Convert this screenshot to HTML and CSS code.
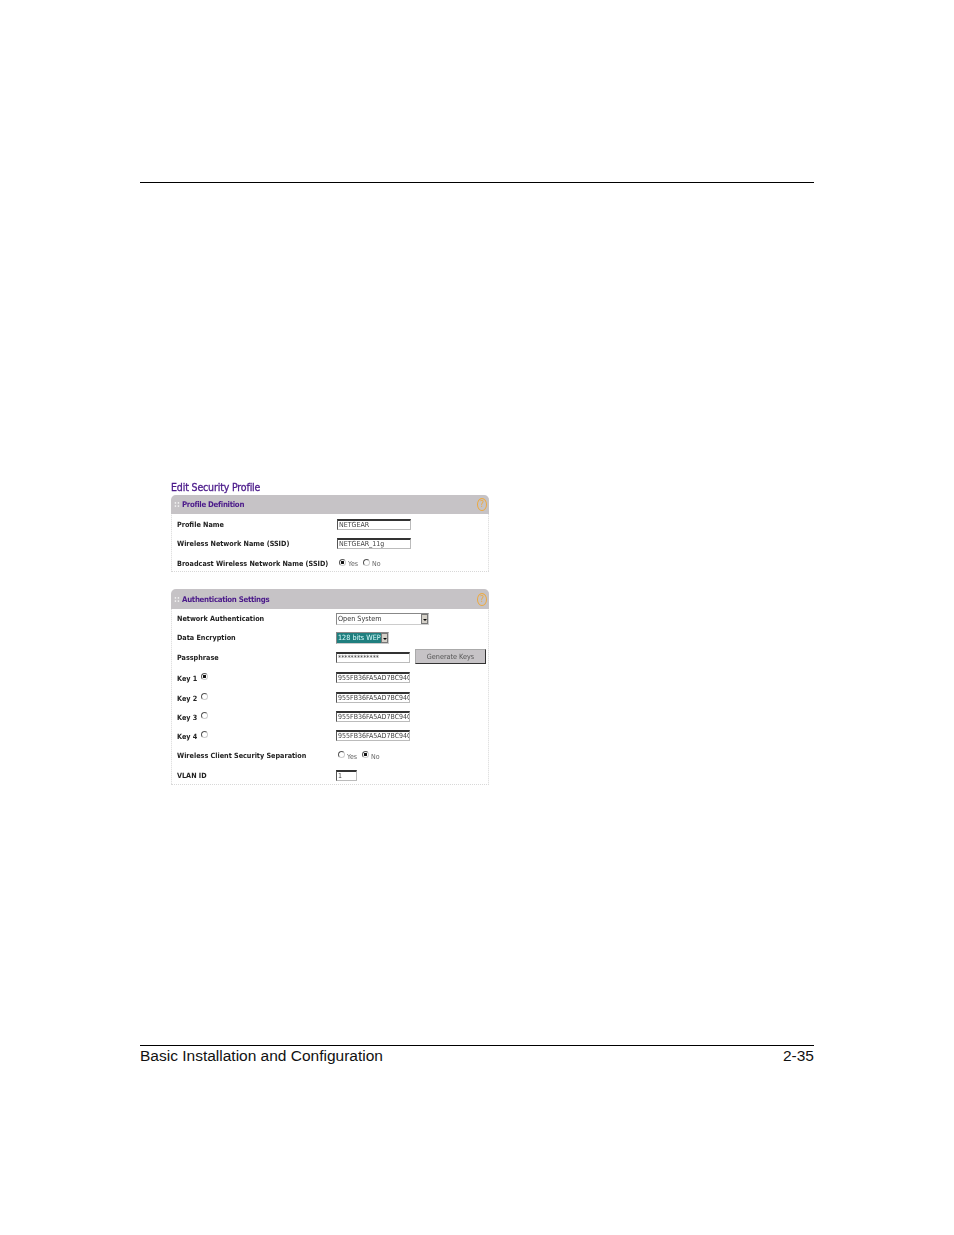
FILE: index.html
```html
<!DOCTYPE html>
<html lang="en">
<head>
    <meta charset="UTF-8">
    <title>Basic Installation and Configuration 2-35</title>
    <link rel="stylesheet" href="styles.css">
</head>
<body>
    <div class="page">
        <div class="topRule"></div>

        <div class="shot">
            <h2>Edit Security Profile</h2>

            <!-- Profile Definition -->
            <div class="panel first">
                <div class="panelHead">
                    <span class="dots">::</span>
                    <span class="panelTitle">Profile Definition</span>
                    <span class="help">?</span>
                </div>
                <div class="row low">
                    <label>Profile Name</label>
                    <div class="box wide shift">NETGEAR</div>
                </div>
                <div class="row low">
                    <label>Wireless Network Name (SSID)</label>
                    <div class="box wide shift">NETGEAR_11g</div>
                </div>
                <div class="row low">
                    <label>Broadcast Wireless Network Name (SSID)</label>
                    <div class="radios shift">
                        <span class="radio on"></span><span class="opt">Yes</span>
                        <span class="radio"></span><span class="opt">No</span>
                    </div>
                </div>
            </div>

            <!-- Authentication Settings -->
            <div class="panel">
                <div class="panelHead big">
                    <span class="dots">::</span>
                    <span class="panelTitle">Authentication Settings</span>
                    <span class="help">?</span>
                </div>
                <div class="row">
                    <label>Network Authentication</label>
                    <div class="select sysSel"><span class="selText">Open System</span><span class="arrow"></span></div>
                </div>
                <div class="row">
                    <label>Data Encryption</label>
                    <div class="select encSel"><span class="selText picked">128 bits WEP</span><span class="arrow"></span></div>
                </div>
                <div class="row">
                    <label>Passphrase</label>
                    <div class="box wide">*************</div>
                    <div class="genBtn">Generate Keys</div>
                </div>
                <div class="row key tall">
                    <label><span class="keyName">Key 1</span><span class="radio on"></span></label>
                    <div class="box wide">955FB36FA5AD7BC94C</div>
                </div>
                <div class="row key">
                    <label><span class="keyName">Key 2</span><span class="radio"></span></label>
                    <div class="box wide">955FB36FA5AD7BC94C</div>
                </div>
                <div class="row key">
                    <label><span class="keyName">Key 3</span><span class="radio"></span></label>
                    <div class="box wide">955FB36FA5AD7BC94C</div>
                </div>
                <div class="row key">
                    <label><span class="keyName">Key 4</span><span class="radio"></span></label>
                    <div class="box wide">955FB36FA5AD7BC94C</div>
                </div>
                <div class="row low">
                    <label>Wireless Client Security Separation</label>
                    <div class="radios">
                        <span class="radio"></span><span class="opt">Yes</span>
                        <span class="radio on"></span><span class="opt">No</span>
                    </div>
                </div>
                <div class="row low">
                    <label>VLAN ID</label>
                    <div class="box vlan">1</div>
                </div>
            </div>
        </div>

        <div class="footer">
            <span>Basic Installation and Configuration</span>
            <span>2-35</span>
        </div>
    </div>
</body>
</html>
```

FILE: styles.css
```css
*{
    margin: 0;
    padding: 0;
    box-sizing: border-box;
}
body{
    background: #fff;
    font-family: "Liberation Sans", Arial, sans-serif;
    color: #000;
}
.page{
    width: 954px;
    height: 1235px;
    padding: 182px 140px 0;
}
.topRule{
    height: 1px;
    background: #000;
}
.shot{
    width: 318px;
    height: 862px;
    margin-left: 31px;
    padding-top: 297px;
    font-family: "DejaVu Sans Condensed", "DejaVu Sans", sans-serif;
    filter: blur(.45px);
}
h2{
    font-size: 10.5px;
    line-height: 14px;
    font-weight: normal;
    -webkit-text-stroke: .3px #4b1a8a;
    color: #4b1a8a;
    letter-spacing: -.15px;
    margin-bottom: 1px;
}
/* panels */
.panel{
    border: 1px dotted #d8d8d8;
    border-top: none;
    border-radius: 5px 5px 0 0;
}
.panel.first{
    height: 77px;
    margin-bottom: 17px;
}
.panelHead{
    height: 19px;
    margin: 0 -1px;
    background: #c6c3c6;
    border-radius: 5px 5px 0 0;
    display: flex;
    align-items: center;
    padding: 0 2px 0 3px;
}
.panelHead.big{
    height: 20px;
}
.dots{
    color: #eee;
    font-size: 8px;
    font-weight: bold;
    width: 8px;
}
.panelTitle{
    color: #4b1a8a;
    font-size: 7.8px;
    font-weight: bold;
    letter-spacing: -.3px;
    flex: 1;
}
.help{
    width: 10px;
    height: 13px;
    border: 1px solid #eda93e;
    border-radius: 50%;
    color: #eda93e;
    font-size: 9px;
    line-height: 11px;
    text-align: center;
}
/* rows */
.row{
    height: 19.3px;
    display: flex;
    align-items: center;
    padding-left: 5px;
}
.row.low{
    padding-top: 2px;
}
.row.tall{
    height: 20.5px;
}
label{
    width: 159px;
    flex: none;
    display: flex;
    align-items: center;
    font-size: 7.2px;
    font-weight: bold;
    color: #222;
    white-space: nowrap;
}
.key label{
    margin-top: 2px;
}
.key .radio{
    top: -2px;
    left: -1px;
}
.keyName{
    margin-right: 5px;
}
.shift{
    margin-left: 1px;
}
.box{
    height: 11px;
    border: 1px solid #bbb;
    border-top: 2px solid #333;
    border-left-color: #555;
    background: #fff;
    font-size: 7px;
    line-height: 9px;
    color: #444;
    overflow: hidden;
    white-space: nowrap;
    padding-left: 1px;
}
.box.wide{
    width: 74px;
}
.box.vlan{
    width: 21px;
}
.radios{
    display: flex;
    align-items: center;
    padding-left: 2px;
}
.radio{
    width: 7px;
    height: 7px;
    flex: none;
    border: 1px solid;
    border-color: #555 #ccc #ccc #555;
    border-radius: 50%;
    background: #fff;
    position: relative;
    top: -1px;
}
.radio.on{
    background: radial-gradient(circle, #111 0 1.4px, #fff 1.7px);
}
.opt{
    font-size: 7px;
    color: #666;
    margin: 2px 5px 0 2px;
}
.select{
    height: 12px;
    display: flex;
    background: #fff;
    border: 1px solid #ccc;
    border-top-color: #888;
    border-left-color: #888;
    font-size: 7.2px;
    line-height: 10px;
    color: #333;
}
.sysSel{
    width: 93px;
}
.encSel{
    width: 53px;
}
.selText{
    flex: 1;
    padding-left: 1px;
    overflow: hidden;
    white-space: nowrap;
}
.selText.picked{
    background: #1f7f7f;
    color: #dff;
}
.arrow{
    width: 7px;
    background: #d4d0c8;
    border: 1px solid #777;
    position: relative;
}
.arrow::after{
    content: "";
    position: absolute;
    left: 1px;
    top: 4px;
    border: 2px solid transparent;
    border-top-color: #000;
    border-bottom: none;
}
.genBtn{
    width: 71px;
    height: 15px;
    margin: 0 0 1px 5px;
    background: #c6c3c6;
    border: 1px solid #aaa;
    border-right-color: #333;
    border-bottom-color: #333;
    font-size: 7.2px;
    line-height: 13px;
    text-align: center;
    color: #555;
}
/* page footer */
.footer{
    border-top: 1px solid #000;
    display: flex;
    justify-content: space-between;
    font-size: 15.5px;
    line-height: 20px;
    color: #111;
}
```
